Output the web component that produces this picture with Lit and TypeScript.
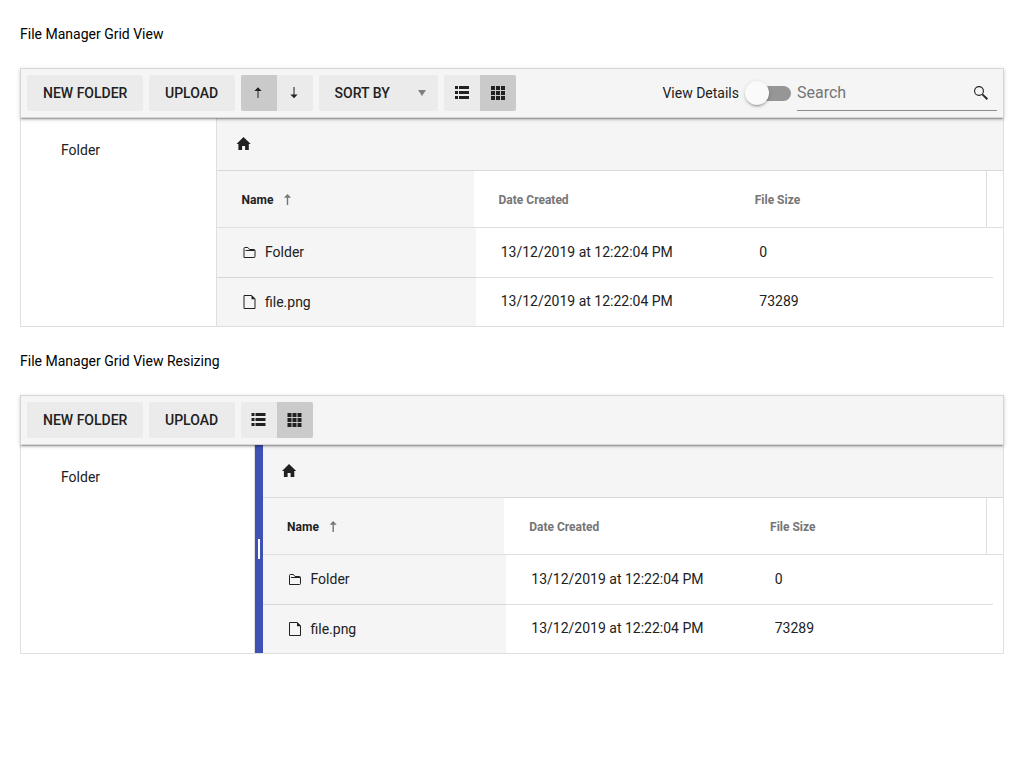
import { LitElement, html, css, svg, nothing } from "lit";
import { customElement, property } from "lit/decorators.js";

// `dx` nudges the glyph inside its box by a fraction of a pixel.
const icon = (body: unknown, w = 14, h = 14, cls = "icon", dx = 0) =>
  html`<svg class=${cls} width=${w} height=${h} viewBox="0 0 ${w} ${h}" fill="currentColor"><g transform="translate(${dx} 0)">${body}</g></svg>`;

const arrowUp = () => icon(svg`<path d="M6 0.3 L9.6 4 H2.4Z"/><path d="M5 4h2v7H5z" opacity=".5"/>`, 14, 12);
const arrowDown = () => icon(svg`<path d="M5 0h2v8H5z" opacity=".5"/><path d="M6 11.2 L2.4 7.5 H9.6Z"/>`, 14, 12);
const listIcon = (dx: number) => icon(svg`<path d="M1 0h3v3H1zM5 0h10v3H5zM1 5h3v3H1zM5 5h10v3H5zM1 10h3v3H1zM5 10h10v3H5z"/>`, 16, 14, "icon", dx);
const gridIcon = (dx: number) => icon(svg`<path d="M1 0h4v4H1zM6 0h4v4H6zM11 0h4v4h-4zM1 5h4v4H1zM6 5h4v4H6zM11 5h4v4h-4zM1 10h4v4H1zM6 10h4v4H6zM11 10h4v4h-4z"/>`, 16, 14, "icon", dx);
const homeIcon = (dx: number) => icon(svg`<path d="M7 0L14.2 7H12.3V13H8.6V9H5.6V13H1.9V7H0Z"/>`, 15, 13, "icon", dx);
const caret = () => icon(svg`<path d="M0 0H8L4 6Z"/>`, 8, 6, "icon caret");
const searchIcon = () =>
  icon(svg`<circle cx="5" cy="5" r="4.4" fill="none" stroke="currentColor" stroke-width="1.1"/><path d="M7.8 8.9L9 7.8L14 12.6L12.7 14Z"/>`);
const sortArrow = (dx: number) => icon(svg`<path d="M3.5 0L7 3.8H0Z"/><path d="M2.8 3.5h1.4V11H2.8z"/>`, 8, 11, "icon sorted", dx);
const folderIcon = (dx: number) =>
  icon(svg`<path d="M.5 10.5V1.4Q.5.5 1.4.5H4.4L6 2.5H10.6Q11.5 2.5 11.5 3.4V9.6Q11.5 10.5 10.6 10.5H.5ZM2 3.5H11" fill="none" stroke="currentColor"/>`, 13, 11, "icon", dx);
const fileIcon = (dx: number) =>
  icon(svg`<path d="M.5.5H8.2L11.5 3.9V13.5H.5Z" fill="none" stroke="currentColor"/><path d="M8 0L12 4.2H8Z"/>`, 13, 14, "icon", dx);

@customElement("file-manager")
export class FileManager extends LitElement {
  @property({ type: Boolean }) resizable = false;

  static styles = css`
    :host { display: block; color: #212121; font: 14px/20px Roboto, sans-serif; }
    * { box-sizing: border-box; }
    .icon { display: block; flex: none; }
    .manager { --inset: 0px; height: 259px; border: 1px solid #dfdfdf; border-top: 0; display: flex; flex-direction: column; }
    .resizable { --inset: 0.5px; }
    .toolbar {
      display: flex; align-items: center; gap: 6px; height: 50px; flex: none;
      margin: 0 -1px; padding: 6px; position: relative; z-index: 1;
      background: #f5f5f5; border: 1px solid #d6d6d6;
      box-shadow: 0 3px 1px -2px rgba(0,0,0,.2), 0 2px 2px 0 rgba(0,0,0,.14), 0 1px 5px 0 rgba(0,0,0,.12);
    }
    .btn, .group { display: flex; align-items: center; height: 36px; background: #ebebeb; border-radius: 2px; flex: none; }
    .btn { padding: 0 16px; font-weight: 500; white-space: nowrap; }
    .new { width: 116px; } .upload { width: 86px; }
    .group { overflow: hidden; }
    .toggle { display: flex; align-items: center; justify-content: center; width: 36px; height: 36px; }
    .on { background: #cacaca; }
    .sort { width: 119px; padding: 0 12px 0 15.6px; justify-content: space-between; }
    .caret { color: #7f7f7f; }
    .spacer { flex: 1; }
    .details { display: flex; align-items: center; gap: 6px; }
    .switch { display: flex; align-items: center; width: 46px; height: 24px; }
    .thumb { width: 24px; height: 24px; border-radius: 50%; background: #fafafa; z-index: 1;
      box-shadow: 0 3px 1px -2px rgba(0,0,0,.2), 0 2px 2px 0 rgba(0,0,0,.14), 0 1px 5px 0 rgba(0,0,0,.12); }
    .track { width: 38px; height: 15px; margin-left: -16px; border-radius: 8px; background: #969696; }
    .search { display: flex; align-items: center; justify-content: space-between; width: 200px; height: 35px;
      border-bottom: 1px solid #8c8c8c; padding-right: 9px; font-size: 16px; color: #757575; }
    .search .icon { color: #212121; }
    .body { display: flex; flex: 1; min-height: 0; }
    .tree { width: 196px; border-right: 1px solid #dfdfdf; padding: 22px 0 0 40px; flex: none; }
    .resizable .tree { width: 234px; }
    .splitter { width: 8px; background: #3f51b5; display: flex; align-items: center; justify-content: center; flex: none; }
    .handle { width: 2px; height: 20px; background: #fff; }
    .main { flex: 1; min-width: 0; display: flex; flex-direction: column; }
    .crumbs { height: 53px; background: #f5f5f5; border-bottom: 1px solid #d9d9d9; padding: 19px 0 0 19px; flex: none; }
    .head, .row { display: grid; grid-template-columns: repeat(3, 1fr); }
    .head { height: 57px; padding-right: 16px; border-bottom: 1px solid #dfdfdf; font-size: 12px; font-weight: 700; color: #757575; }
    .cell { display: flex; align-items: center; }
    .head .cell { padding-left: calc(24.6px - var(--inset)); padding-top: 2px; }
    .head .cell:nth-child(2) { padding-left: 24.9px; }
    .head .cell:nth-child(3) { padding-left: 24.4px; }
    .head .cell:first-child { background: #f5f5f5; color: #212121; }
    .head .cell:last-child { border-right: 1px solid #dfdfdf; }
    .sorted { margin-left: 10.5px; margin-top: -1px; color: #757575; }
    .row { height: 50px; padding-right: 10px; }
    .row .cell { border-bottom: 1px solid #dfdfdf; padding-left: 25px; padding-bottom: 1px; }
    .row .cell:first-child { background: #f5f5f5; gap: calc(9px - var(--inset)); padding-left: 26px; border-color: #d6d6d6; }
    .row .cell:first-child .icon { margin-top: 1px; }
    .row:last-child { height: 48px; }
    .row:last-child .cell { border: 0; padding-bottom: 2px; }
    .row:last-child .cell:first-child { padding-bottom: 0; }
    .row:last-child .cell:first-child .icon { margin-top: 0; }
  `;

  private views() {
    const dx = this.resizable ? -0.5 : 0;
    return html`<div class="group">
      <span class="toggle">${listIcon(dx)}</span><span class="toggle on">${gridIcon(dx)}</span>
    </div>`;
  }

  private row(name: string, glyph: unknown, size: string) {
    return html`<div class="row">
      <div class="cell">${glyph}<span>${name}</span></div>
      <div class="cell">13/12/2019 at 12:22:04 PM</div>
      <div class="cell">${size}</div>
    </div>`;
  }

  render() {
    const r = this.resizable;
    const dx = r ? 0 : 0.5;
    return html`<div class="manager ${r ? "resizable" : ""}">
      <div class="toolbar">
        <span class="btn new">NEW FOLDER</span>
        <span class="btn upload">UPLOAD</span>
        ${r ? nothing : html`<div class="group">
            <span class="toggle on">${arrowUp()}</span><span class="toggle">${arrowDown()}</span>
          </div>
          <span class="btn sort">SORT BY ${caret()}</span>`}
        ${this.views()}
        ${r ? nothing : html`<span class="spacer"></span>
          <div class="details">View Details
            <span class="switch"><span class="thumb"></span><span class="track"></span></span>
          </div>
          <div class="search"><span>Search</span>${searchIcon()}</div>`}
      </div>
      <div class="body">
        <div class="tree">Folder</div>
        ${r ? html`<div class="splitter"><span class="handle"></span></div>` : nothing}
        <div class="main">
          <div class="crumbs">${homeIcon(dx)}</div>
          <div class="head">
            <div class="cell">Name ${sortArrow(r ? 0.7 : 0)}</div>
            <div class="cell">Date Created</div>
            <div class="cell">File Size</div>
          </div>
          ${this.row("Folder", folderIcon(dx), "0")}
          ${this.row("file.png", fileIcon(dx), "73289")}
        </div>
      </div>
    </div>`;
  }
}

@customElement("app-root")
export class AppRoot extends LitElement {
  static styles = css`
    :host { display: block; padding: 0 20px; background: #fff; color: #000; font: 14px/20px Roboto, sans-serif; }
    .title { height: 68px; padding-top: 24px; box-sizing: border-box; }
  `;
  render() {
    return html`
      <div class="title">File Manager Grid View</div>
      <file-manager></file-manager>
      <div class="title">File Manager Grid View Resizing</div>
      <file-manager resizable></file-manager>
    `;
  }
}
